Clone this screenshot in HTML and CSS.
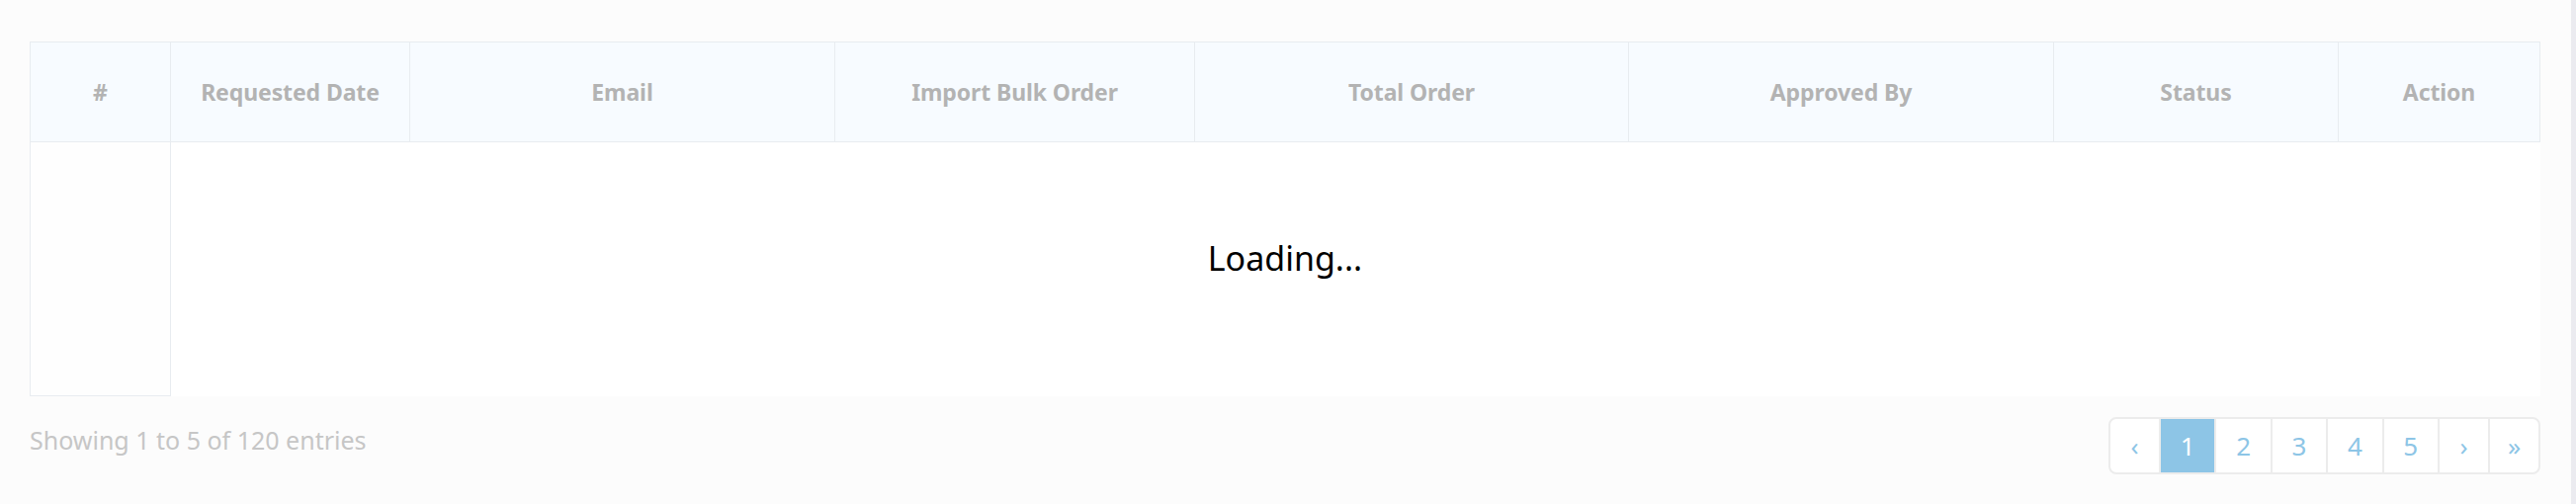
FILE: index.html
```html
<!DOCTYPE html>
<html lang="en">
<head>
<meta charset="utf-8">
<title>Bulk Orders</title>
<link rel="stylesheet" href="styles.css">
</head>
<body>
<div class="page">
  <main class="main">
    <div class="table">
      <div class="thead">
        <div class="th">#</div>
        <div class="th">Requested Date</div>
        <div class="th">Email</div>
        <div class="th">Import Bulk Order</div>
        <div class="th">Total Order</div>
        <div class="th">Approved By</div>
        <div class="th">Status</div>
        <div class="th">Action</div>
      </div>
      <div class="tbody">
        <div class="td-first"></div>
        <div class="loading">Loading...</div>
      </div>
    </div>
    <div class="footer">
      <div class="info">Showing 1 to 5 of 120 entries</div>
      <ul class="pagination">
        <li class="pg pg-arrow">&lsaquo;</li>
        <li class="pg pg-num active">1</li>
        <li class="pg pg-num">2</li>
        <li class="pg pg-num">3</li>
        <li class="pg pg-num">4</li>
        <li class="pg pg-num">5</li>
        <li class="pg pg-arrow">&rsaquo;</li>
        <li class="pg pg-arrow">&raquo;</li>
      </ul>
    </div>
  </main>
  <div class="scrollbar"></div>
</div>
</body>
</html>
```
FILE: styles.css
```css
html, body {
  margin: 0;
  padding: 0;
}
body {
  background: #fcfcfc;
  font-family: "Noto Sans", "Open Sans", sans-serif;
  width: 2606px;
  height: 510px;
  overflow: hidden;
}
.page {
  display: flex;
  height: 510px;
}
.main {
  flex: 1;
  padding: 42px 31px 0 30px;
  background: #fcfcfc;
}
.scrollbar {
  width: 6px;
  background: #ebebf0;
}
.table {
  width: 2540px;
}
.thead {
  display: grid;
  grid-template-columns: 142px 242px 430px 364px 439px 430px 288px 1fr;
  box-sizing: border-box;
  width: 2540px;
  height: 102px;
  border: 1px solid #e8ecf0;
  background: #f7fbff;
}
.th {
  display: flex;
  align-items: center;
  justify-content: center;
  border-right: 1px solid #e8ecf0;
  font-weight: 700;
  font-size: 23px;
  color: #b3b3b3;
  letter-spacing: -0.1px;
}
.th:last-child {
  border-right: none;
}
.tbody {
  position: relative;
  display: flex;
  height: 257px;
  background: #ffffff;
}
.td-first {
  box-sizing: border-box;
  width: 143px;
  height: 257px;
  border: 1px solid #e8ecf0;
  border-top: none;
  background: #fefefe;
}
.loading {
  position: absolute;
  inset: 0;
  display: flex;
  align-items: center;
  justify-content: center;
  padding-bottom: 24px;
  font-size: 34px;
  color: #000;
}
.footer {
  display: flex;
  justify-content: space-between;
  align-items: flex-start;
  padding-top: 21px;
}
.info {
  margin-top: 7px;
  font-size: 25px;
  line-height: 32px;
  color: #c6c6c6;
}
.pagination {
  display: flex;
  margin: 0;
  padding: 0;
  list-style: none;
  border: 2px solid #ececec;
  border-radius: 8px;
  overflow: hidden;
  background: #fff;
}
.pg {
  display: flex;
  align-items: center;
  justify-content: center;
  height: 54px;
  font-size: 26px;
  color: #8dc5e6;
  border-left: 2px solid #ececec;
}
.pg:first-child {
  border-left: none;
}
.pg-num {
  width: 54.4px;
}
.pg-arrow {
  width: 49px;
}
.pg.active {
  background: #8dc5e6;
  color: #fff;
}
```
